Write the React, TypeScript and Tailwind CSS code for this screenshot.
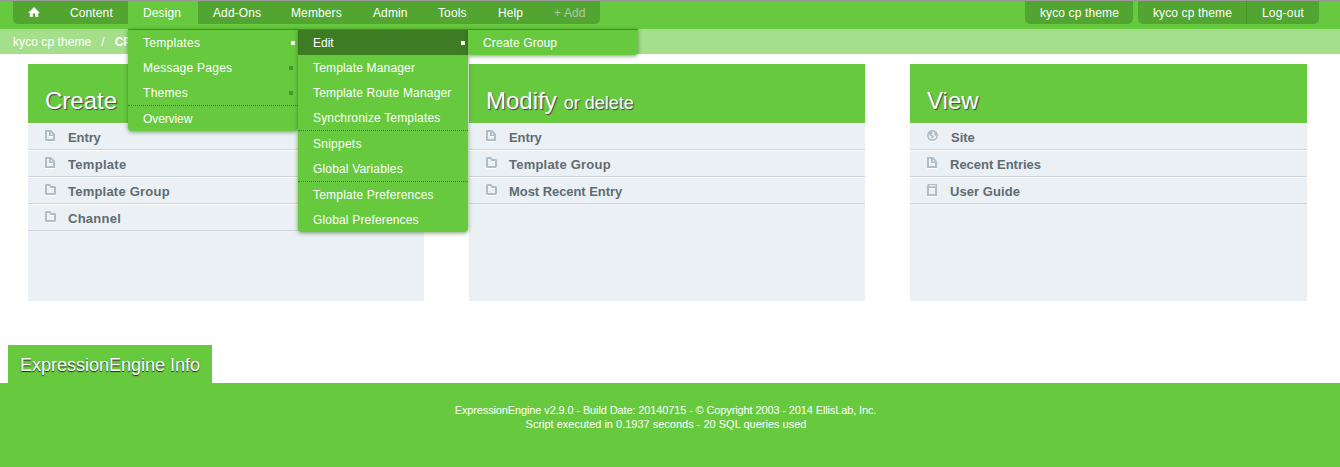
import React from "react";

type Kind = "page" | "folder" | "globe" | "book";

const shapes: Record<Kind, React.ReactNode> = {
  page: (
    <path fillRule="evenodd" d="M0 0H6L10 4V11H0Z M2 2V9H8V6H4V2Z M6 2.6V4.4H7.8Z" />
  ),
  folder: (
    <path fillRule="evenodd" d="M0 1L1 0H5L6.5 2H10L11 3V10L10 11H1L0 10Z M2 2V9H9V4H5.5L4.2 2Z" />
  ),
  globe: (
    <g>
      <path fillRule="evenodd" d="M5.5 0A5.5 5.5 0 1 1 5.5 11A5.5 5.5 0 1 1 5.5 0Z M5.5 1.7A3.8 3.8 0 1 0 5.5 9.3A3.8 3.8 0 1 0 5.5 1.7Z" />
      <path d="M1.5 2.5L4.5 1.2L6 3L4.5 4.5L7 6.2L5.8 8.5L4.5 8L4 6L1.8 5Z M7 2L9.5 3.5V7L8 5.5L7.2 4Z" />
    </g>
  ),
  book: (
    <path fillRule="evenodd" d="M1 0H10V12H0V1Z M2 1.3V2.3H8.5V1.3Z M2 4V10.2H8V4Z" />
  ),
};

function RowIcon({ kind }: { kind: Kind }) {
  return (
    <svg width="12" height="14" viewBox="0 0 12 14" className="shrink-0">
      <g fill="#ffffff" transform="translate(0 1)">{shapes[kind]}</g>
      <g fill="#afbdc7">{shapes[kind]}</g>
    </svg>
  );
}

function NavItem({ label, width, active, muted }: { label: string; width: string; active?: boolean; muted?: boolean }) {
  return (
    <div className={`${width} h-full pl-[15px] leading-6 tracking-[0.12px] ${active ? "bg-[#67c93e]" : ""} ${muted ? "text-[#b5c5b0]" : ""}`}>{label}</div>
  );
}

function Panel({ title, sub, rows }: { title: string; sub?: string; rows: [Kind, string, string][] }) {
  return (
    <section className="h-[237px] bg-[#eaf0f3]">
      <h2 className="h-[59px] bg-[#67c93e] pl-[17px] pt-[19px] text-2xl leading-9 text-white [text-shadow:1px_1px_1px_#444]">
        {title}
        {sub && <small className="ml-[7px] text-lg">{sub}</small>}
      </h2>
      <ul>
        {rows.map(([kind, label, tracking]) => (
          <li key={label} className="flex h-[27px] items-start border-b border-t border-b-[#ccd5db] border-t-white pl-[17px] pt-[6px]">
            <RowIcon kind={kind} />
            <span className={`${kind === "globe" ? "ml-3" : "ml-[11px]"} ${tracking} text-[13px] font-bold leading-4 text-[#5f6c74]`}>{label}</span>
          </li>
        ))}
      </ul>
    </section>
  );
}

function MenuItem({ label, more, lit, active, rule, tracking = "tracking-[0.17px]" }: {
  label: string;
  more?: boolean;
  lit?: boolean;
  active?: boolean;
  rule?: boolean;
  tracking?: string;
}) {
  return (
    <li
      className={`flex items-center justify-between pl-[15px] ${rule ? "h-[26px] border-t border-dotted border-[#3e7c24]" : "h-[25px]"} ${active ? "bg-[#3e7c24]" : ""}`}
    >
      <span className={tracking}>{label}</span>
      {more && <i className={`size-1 ${lit ? "mr-[3px] bg-white" : "mr-[5px] bg-[#4a962b]"}`} />}
    </li>
  );
}

const menu = "absolute top-[29px] w-[170px] rounded-b border-t border-[#459026] bg-[#67c93e] shadow-[0_1px_4px_rgba(40,90,20,0.6)]";

export default function App() {
  return (
    <div className="relative flex h-[467px] w-[1340px] flex-col overflow-hidden bg-white text-xs text-white [font-family:'Liberation_Sans',Arial,sans-serif]">
      <header className="flex h-[29px] shrink-0 items-start border-t border-[#999] bg-[#67c93e] pl-[13px] pr-[21px]">
        <nav className="flex h-[23px] w-[587px] overflow-hidden rounded-b-[5px] bg-[#52a530]">
          <div className="flex w-[42px] justify-center pt-[6px]">
            <svg width="12" height="10" viewBox="0 0 12 10" fill="#fff">
              <path d="M6 0L12 6H10.2V10H7.2V6.5H4.8V10H1.8V6H0Z" />
            </svg>
          </div>
          <NavItem label="Content" width="w-[73px]" />
          <NavItem label="Design" width="w-[70px]" active />
          <NavItem label="Add-Ons" width="w-[78px]" />
          <NavItem label="Members" width="w-[82px]" />
          <NavItem label="Admin" width="w-[65px]" />
          <NavItem label="Tools" width="w-[60px]" />
          <NavItem label="Help" width="w-[56px]" />
          <NavItem label="+ Add" width="w-[61px]" muted />
        </nav>
        <div className="ml-auto flex h-[23px] w-[108px] rounded-b-[5px] bg-[#52a530]">
          <NavItem label="kyco cp theme" width="w-[108px]" />
        </div>
        <div className="ml-[5px] flex h-[23px] w-[181px] rounded-b-[5px] bg-[#52a530]">
          <NavItem label="kyco cp theme" width="w-[108px]" />
          <div className="w-[73px] border-l border-dotted border-[#3e8a22] pl-[15px] leading-6 tracking-[0.2px]">Log-out</div>
        </div>
      </header>
      <div className="flex h-[25px] shrink-0 bg-[#a5df8c] pl-[13px] leading-[26px]">
        <span className="tracking-[0.07px]">kyco cp theme</span>
        <span className="ml-[10px]">/</span>
        <b className="ml-[10px] w-[14px] overflow-hidden">CP</b>
      </div>
      <main className="mt-[10px] grid grid-cols-[396px_396px_397px] gap-x-[45px] pl-7">
        <Panel
          title="Create"
          rows={[
            ["page", "Entry", "tracking-[-0.1px]"],
            ["page", "Template", "tracking-[0.3px]"],
            ["folder", "Template Group", "tracking-[0.22px]"],
            ["folder", "Channel", "tracking-[0.25px]"],
          ]}
        />
        <Panel
          title="Modify"
          sub="or delete"
          rows={[
            ["page", "Entry", "tracking-[-0.1px]"],
            ["folder", "Template Group", "tracking-[0.22px]"],
            ["folder", "Most Recent Entry", "tracking-[-0.06px]"],
          ]}
        />
        <Panel
          title="View"
          rows={[
            ["globe", "Site", "tracking-normal"],
            ["page", "Recent Entries", "tracking-normal"],
            ["book", "User Guide", "tracking-[0.06px]"],
          ]}
        />
      </main>
      <h3 className="ml-2 mt-[44px] h-[38px] w-[204px] bg-[#67c93e] pl-3 text-lg leading-10 [text-shadow:0_1px_1px_#222]">ExpressionEngine Info</h3>
      <footer className="grow bg-[#67c93e] pt-5 text-center text-[11px] leading-[14px]">
        <p className="-ml-[9px] tracking-[-0.125px]">ExpressionEngine v2.9.0 - Build Date: 20140715 - © Copyright 2003 - 2014 EllisLab, Inc.</p>
        <p className="-ml-[8px]">Script executed in 0.1937 seconds - 20 SQL queries used</p>
      </footer>

      <ul className={`${menu} left-32`}>
        <MenuItem label="Templates" more lit tracking="tracking-[0.28px]" />
        <MenuItem label="Message Pages" more tracking="tracking-[0.25px]" />
        <MenuItem label="Themes" more tracking="tracking-[0.3px]" />
        <MenuItem label="Overview" rule tracking="tracking-[-0.1px]" />
      </ul>
      <ul className={`${menu} left-[298px]`}>
        <MenuItem label="Edit" more lit active tracking="tracking-normal" />
        <MenuItem label="Template Manager" />
        <MenuItem label="Template Route Manager" />
        <MenuItem label="Synchronize Templates" />
        <MenuItem label="Snippets" rule tracking="tracking-[0.25px]" />
        <MenuItem label="Global Variables" />
        <MenuItem label="Template Preferences" rule tracking="tracking-[0.2px]" />
        <MenuItem label="Global Preferences" />
      </ul>
      <ul className={`${menu} left-[468px]`}>
        <MenuItem label="Create Group" tracking="tracking-[0.12px]" />
      </ul>
    </div>
  );
}
